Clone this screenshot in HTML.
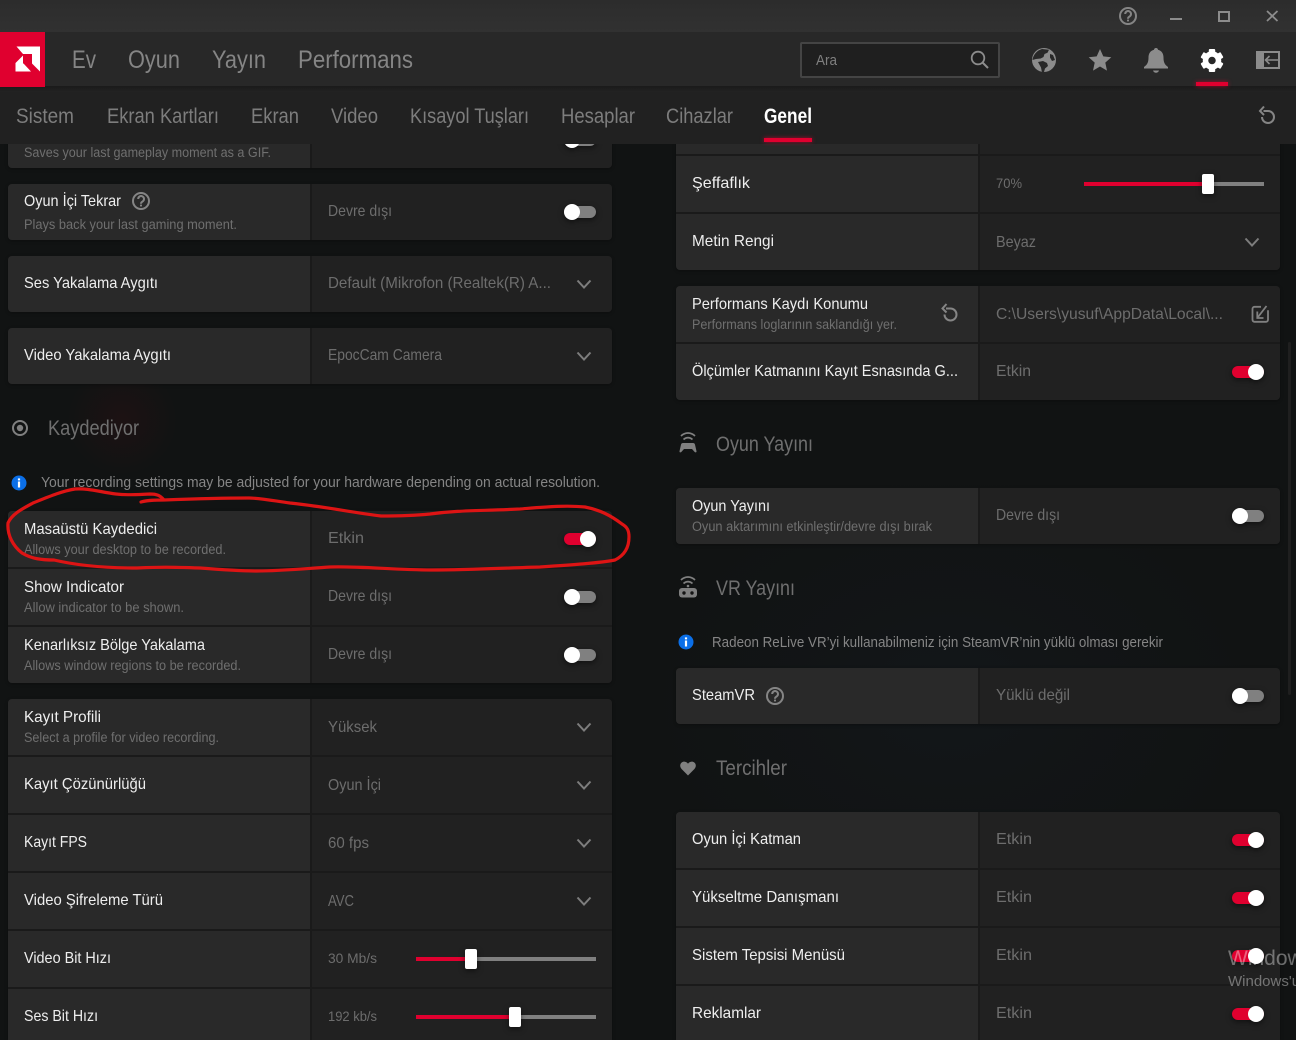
<!DOCTYPE html>
<html lang="tr"><head><meta charset="utf-8"><title>Radeon Ayarları</title>
<style>
html,body{margin:0;padding:0;width:1296px;height:1040px;overflow:hidden;background:#111313}
#wrap{position:relative;width:1296px;height:1040px;overflow:hidden}
#bg{position:absolute;left:0;top:0;width:1296px;height:1040px;background:radial-gradient(circle at 122px 420px,rgba(70,15,20,.22),rgba(70,15,20,0) 55px),radial-gradient(ellipse at 950px 700px,rgba(20,28,36,.35),rgba(0,0,0,0) 300px),#111313}
.g{position:absolute;width:604px;border-radius:4px;overflow:hidden;box-shadow:0 1px 3px rgba(0,0,0,.3)}
.l{left:8px;background:linear-gradient(90deg,#292929 302px,#1a1a1a 302px,#1a1a1a 304px,#212121 304px)}
.r{left:676px;background:linear-gradient(90deg,#292929 302px,#1a1a1a 302px,#1a1a1a 304px,#212121 304px)}
svg#m{position:absolute;left:0;top:0}
text{font-family:"Liberation Sans Narrow","Liberation Sans",sans-serif;white-space:pre}
.t{font-size:16px;fill:#eeeeee}
.s{font-size:13.5px;fill:#6f6f6f}
.v{font-size:16px;fill:#6d6d6d}
.n{font-size:13.5px;fill:#6d6d6d}
.h{font-size:21px;fill:#6f6f6f}
.i{font-size:15px;fill:#858585}
.a{font-size:25px;fill:#858585}
.b{font-size:21.5px;fill:#7d7d7d}
.w{font-family:"Liberation Sans",sans-serif;fill:rgba(255,255,255,.38)}
.sh{filter:drop-shadow(0 2px 3px rgba(0,0,0,.5))}
</style></head><body>
<div id="wrap">
<div id="bg"></div>
<div class="g l" style="top:130px;height:38px"></div>
<div class="g l" style="top:184px;height:56px"></div>
<div class="g l" style="top:256px;height:56px"></div>
<div class="g l" style="top:328px;height:56px"></div>
<div class="g l" style="top:511px;height:172px"></div>
<div class="g l" style="top:699px;height:341px;border-bottom-left-radius:0;border-bottom-right-radius:0"></div>
<div class="g r" style="top:130px;height:140px"></div>
<div class="g r" style="top:286px;height:114px"></div>
<div class="g r" style="top:488px;height:56px"></div>
<div class="g r" style="top:668px;height:56px"></div>
<div class="g r" style="top:812px;height:228px;border-bottom-left-radius:0;border-bottom-right-radius:0"></div>
<svg id="m" width="1296" height="1040" viewBox="0 0 1296 1040" xmlns="http://www.w3.org/2000/svg">
<defs>
<linearGradient id="tb" x1="0" x2="0" y1="0" y2="1"><stop offset="0" stop-color="#2c2c2c"/><stop offset="1" stop-color="#313131"/></linearGradient>
<linearGradient id="sd" x1="0" x2="0" y1="0" y2="1"><stop offset="0" stop-color="#1a1a1a"/><stop offset="1" stop-color="#222"/></linearGradient>
<g id="off" class="sh"><rect x="0" y="-6" width="32" height="12" rx="6" fill="#808080"/><circle cx="8" cy="0" r="8" fill="#fff"/></g>
<g id="on" class="sh"><rect x="0" y="-6" width="32" height="12" rx="6" fill="#e0002f"/><circle cx="24" cy="0" r="8" fill="#fff"/></g>
<path id="ch" d="M-6.5-3.5L0 3.5L6.5-3.5" fill="none" stroke="#7d7d7d" stroke-width="2"/>
<g id="hp" fill="none" stroke="#858585" stroke-width="2"><circle r="8"/><path d="M-2.8-2a2.9 2.9 0 1 1 4.6 2.300c-1.200.8-1.800 1.100-1.800 2.400"/><path d="M0 3.600v1.800"/></g>
<g id="rs" fill="none" stroke="#858585" stroke-width="2"><path d="M-4-3.500H.5a6 6 0 1 1-6 6"/><path d="M-3.500-8L-7.500-3.500L-3.500.5"/></g>
<g id="inf"><circle r="7.500" fill="#0b6fe8"/><rect x="-1.100" y="-1.500" width="2.200" height="6" fill="#fff"/><rect x="-1.100" y="-4.600" width="2.200" height="2" fill="#fff"/></g>
</defs>

<!-- separators -->
<g fill="#1a1a1a">
<rect x="8" y="567" width="604" height="2"/><rect x="8" y="625" width="604" height="2"/>
<rect x="8" y="755" width="604" height="2"/><rect x="8" y="813" width="604" height="2"/><rect x="8" y="871" width="604" height="2"/><rect x="8" y="929" width="604" height="2"/><rect x="8" y="987" width="604" height="2"/>
<rect x="676" y="154" width="604" height="2"/><rect x="676" y="212" width="604" height="2"/>
<rect x="676" y="342" width="604" height="2"/>
<rect x="676" y="868" width="604" height="2"/><rect x="676" y="926" width="604" height="2"/><rect x="676" y="984" width="604" height="2"/>
</g>
<rect x="1288" y="342" width="3" height="353" rx="1.500" fill="#1f1f1f"/>

<!-- left column -->
<use href="#off" x="564" y="140"/>
<text class="s" x="24" y="157" textLength="247" lengthAdjust="spacingAndGlyphs">Saves your last gameplay moment as a GIF.</text>

<text class="t" x="24" y="206" textLength="97" lengthAdjust="spacingAndGlyphs">Oyun İçi Tekrar</text>
<use href="#hp" x="141" y="201"/>
<text class="s" x="24" y="229" textLength="213" lengthAdjust="spacingAndGlyphs">Plays back your last gaming moment.</text>
<text class="v" x="328" y="216" textLength="64" lengthAdjust="spacingAndGlyphs">Devre dışı</text>
<use href="#off" x="564" y="212"/>

<text class="t" x="24" y="288" textLength="134" lengthAdjust="spacingAndGlyphs">Ses Yakalama Aygıtı</text>
<text class="v" x="328" y="288" textLength="223" lengthAdjust="spacingAndGlyphs">Default (Mikrofon (Realtek(R) A...</text>
<use href="#ch" x="584" y="284"/>

<text class="t" x="24" y="360" textLength="147" lengthAdjust="spacingAndGlyphs">Video Yakalama Aygıtı</text>
<text class="v" x="328" y="360" textLength="114" lengthAdjust="spacingAndGlyphs">EpocCam Camera</text>
<use href="#ch" x="584" y="356"/>

<circle cx="20" cy="428" r="7" fill="none" stroke="#808080" stroke-width="2"/><circle cx="20" cy="428" r="3.200" fill="#808080"/>
<text class="h" x="48" y="435" textLength="91" lengthAdjust="spacingAndGlyphs">Kaydediyor</text>
<use href="#inf" x="19" y="483"/>
<text class="i" x="41" y="487" textLength="559" lengthAdjust="spacingAndGlyphs">Your recording settings may be adjusted for your hardware depending on actual resolution.</text>

<text class="t" x="24" y="534" textLength="133" lengthAdjust="spacingAndGlyphs">Masaüstü Kaydedici</text>
<text class="s" x="24" y="554" textLength="202" lengthAdjust="spacingAndGlyphs">Allows your desktop to be recorded.</text>
<text class="v" x="328" y="543" textLength="36" lengthAdjust="spacingAndGlyphs">Etkin</text>
<use href="#on" x="564" y="539"/>

<text class="t" x="24" y="592" textLength="100" lengthAdjust="spacingAndGlyphs">Show Indicator</text>
<text class="s" x="24" y="612" textLength="160" lengthAdjust="spacingAndGlyphs">Allow indicator to be shown.</text>
<text class="v" x="328" y="601" textLength="64" lengthAdjust="spacingAndGlyphs">Devre dışı</text>
<use href="#off" x="564" y="597"/>

<text class="t" x="24" y="650" textLength="181" lengthAdjust="spacingAndGlyphs">Kenarlıksız Bölge Yakalama</text>
<text class="s" x="24" y="670" textLength="217" lengthAdjust="spacingAndGlyphs">Allows window regions to be recorded.</text>
<text class="v" x="328" y="659" textLength="64" lengthAdjust="spacingAndGlyphs">Devre dışı</text>
<use href="#off" x="564" y="655"/>

<text class="t" x="24" y="722" textLength="77" lengthAdjust="spacingAndGlyphs">Kayıt Profili</text>
<text class="s" x="24" y="742" textLength="195" lengthAdjust="spacingAndGlyphs">Select a profile for video recording.</text>
<text class="v" x="328" y="732" textLength="49" lengthAdjust="spacingAndGlyphs">Yüksek</text>
<use href="#ch" x="584" y="727"/>

<text class="t" x="24" y="789" textLength="122" lengthAdjust="spacingAndGlyphs">Kayıt Çözünürlüğü</text>
<text class="v" x="328" y="790" textLength="53" lengthAdjust="spacingAndGlyphs">Oyun İçi</text>
<use href="#ch" x="584" y="785"/>

<text class="t" x="24" y="847" textLength="63" lengthAdjust="spacingAndGlyphs">Kayıt FPS</text>
<text class="v" x="328" y="848" textLength="41" lengthAdjust="spacingAndGlyphs">60 fps</text>
<use href="#ch" x="584" y="843"/>

<text class="t" x="24" y="905" textLength="139" lengthAdjust="spacingAndGlyphs">Video Şifreleme Türü</text>
<text class="v" x="328" y="906" textLength="26" lengthAdjust="spacingAndGlyphs">AVC</text>
<use href="#ch" x="584" y="901"/>

<text class="t" x="24" y="963" textLength="87" lengthAdjust="spacingAndGlyphs">Video Bit Hızı</text>
<text class="n" x="328" y="963" textLength="49" lengthAdjust="spacingAndGlyphs">30 Mb/s</text>
<rect x="416" y="957" width="180" height="4" fill="#808080"/><rect x="416" y="957" width="55" height="4" fill="#e0002f"/>
<rect class="sh" x="465" y="949" width="12" height="20" rx="2" fill="#fff"/>

<text class="t" x="24" y="1021" textLength="74" lengthAdjust="spacingAndGlyphs">Ses Bit Hızı</text>
<text class="n" x="328" y="1021" textLength="49" lengthAdjust="spacingAndGlyphs">192 kb/s</text>
<rect x="416" y="1015" width="180" height="4" fill="#808080"/><rect x="416" y="1015" width="99" height="4" fill="#e0002f"/>
<rect class="sh" x="509" y="1007" width="12" height="20" rx="2" fill="#fff"/>

<!-- right column -->
<text class="t" x="692" y="188" textLength="58" lengthAdjust="spacingAndGlyphs">Şeffaflık</text>
<text class="n" x="996" y="188" textLength="26" lengthAdjust="spacingAndGlyphs">70%</text>
<rect x="1084" y="182" width="180" height="4" fill="#808080"/><rect x="1084" y="182" width="124" height="4" fill="#e0002f"/>
<rect class="sh" x="1202" y="174" width="12" height="20" rx="2" fill="#fff"/>

<text class="t" x="692" y="246" textLength="82" lengthAdjust="spacingAndGlyphs">Metin Rengi</text>
<text class="v" x="996" y="247" textLength="40" lengthAdjust="spacingAndGlyphs">Beyaz</text>
<use href="#ch" x="1252" y="242"/>

<text class="t" x="692" y="309" textLength="176" lengthAdjust="spacingAndGlyphs">Performans Kaydı Konumu</text>
<text class="s" x="692" y="329" textLength="205" lengthAdjust="spacingAndGlyphs">Performans loglarının saklandığı yer.</text>
<use href="#rs" x="950" y="312"/>
<text class="v" x="996" y="319" textLength="227" lengthAdjust="spacingAndGlyphs">C:\Users\yusuf\AppData\Local\...</text>
<g fill="none" stroke="#808080" stroke-width="1.800"><path d="M1261 306.800h-6.500a2 2 0 0 0-2 2v11a2 2 0 0 0 2 2h11.500a2 2 0 0 0 2-2v-9.500"/><path d="M1266.500 306L1258 317"/><path d="M1257.300 311.500V318H1263.500"/></g>

<text class="t" x="692" y="376" textLength="266" lengthAdjust="spacingAndGlyphs">Ölçümler Katmanını Kayıt Esnasında G...</text>
<text class="v" x="996" y="376" textLength="35" lengthAdjust="spacingAndGlyphs">Etkin</text>
<use href="#on" x="1232" y="372"/>

<!-- oyun yayini icon -->
<g fill="none" stroke="#808080" stroke-width="1.700"><path d="M681 436c4-4 10-4 14 0"/><path d="M683.500 439.500c3-2.500 6-2.500 9 0"/></g>
<path d="M683 443h10c1 0 1.700.6 2 1.600l1.500 6.600c.2 1-1 1.600-1.800.8L692 449h-8l-2.700 3c-.8.8-2 .2-1.800-.8l1.500-6.600c.3-1 1-1.600 2-1.600z" fill="#808080"/>
<text class="h" x="716" y="451" textLength="97" lengthAdjust="spacingAndGlyphs">Oyun Yayını</text>

<text class="t" x="692" y="511" textLength="78" lengthAdjust="spacingAndGlyphs">Oyun Yayını</text>
<text class="s" x="692" y="531" textLength="240" lengthAdjust="spacingAndGlyphs">Oyun aktarımını etkinleştir/devre dışı bırak</text>
<text class="v" x="996" y="520" textLength="64" lengthAdjust="spacingAndGlyphs">Devre dışı</text>
<use href="#off" x="1232" y="516"/>

<!-- vr icon -->
<g fill="none" stroke="#808080" stroke-width="1.700"><path d="M681 580c4-4 10-4 14 0"/><path d="M683.500 583.500c3-2.500 6-2.500 9 0"/></g>
<circle cx="688" cy="586" r="1.300" fill="#808080"/>
<rect x="679" y="588" width="18" height="9.500" rx="3" fill="#808080"/><circle cx="684" cy="593" r="1.700" fill="#141414"/><circle cx="692" cy="593" r="1.700" fill="#141414"/>
<text class="h" x="716" y="595" textLength="79" lengthAdjust="spacingAndGlyphs">VR Yayını</text>

<use href="#inf" x="686" y="642"/>
<text class="i" x="712" y="647" textLength="451" lengthAdjust="spacingAndGlyphs">Radeon ReLive VR’yi kullanabilmeniz için SteamVR’nin yüklü olması gerekir</text>

<text class="t" x="692" y="700" textLength="63" lengthAdjust="spacingAndGlyphs">SteamVR</text>
<use href="#hp" x="775" y="696"/>
<text class="v" x="996" y="700" textLength="74" lengthAdjust="spacingAndGlyphs">Yüklü değil</text>
<use href="#off" x="1232" y="696"/>

<path d="M688 775.500l-6.300-6.400c-2-2.100-2-5 0-6.600 1.900-1.500 4.600-1 6.300 1.200 1.700-2.200 4.400-2.700 6.300-1.200 2 1.600 2 4.500 0 6.600z" fill="#808080"/>
<text class="h" x="716" y="775" textLength="71" lengthAdjust="spacingAndGlyphs">Tercihler</text>

<text class="t" x="692" y="844" textLength="109" lengthAdjust="spacingAndGlyphs">Oyun İçi Katman</text>
<text class="v" x="996" y="844" textLength="36" lengthAdjust="spacingAndGlyphs">Etkin</text>
<use href="#on" x="1232" y="840"/>
<text class="t" x="692" y="902" textLength="147" lengthAdjust="spacingAndGlyphs">Yükseltme Danışmanı</text>
<text class="v" x="996" y="902" textLength="36" lengthAdjust="spacingAndGlyphs">Etkin</text>
<use href="#on" x="1232" y="898"/>
<text class="t" x="692" y="960" textLength="153" lengthAdjust="spacingAndGlyphs">Sistem Tepsisi Menüsü</text>
<text class="v" x="996" y="960" textLength="36" lengthAdjust="spacingAndGlyphs">Etkin</text>
<use href="#on" x="1232" y="956"/>
<text class="t" x="692" y="1018" textLength="69" lengthAdjust="spacingAndGlyphs">Reklamlar</text>
<text class="v" x="996" y="1018" textLength="36" lengthAdjust="spacingAndGlyphs">Etkin</text>
<use href="#on" x="1232" y="1014"/>

<!-- hand-drawn annotation -->
<path d="M141 502C148 500 156 500 164 500C160 495 156 494 150 494C135 495 125 495 116 494C100 492 88 488 75 489C62 491 48 497 33 503C22 509 12 514 8 523C7 535 13 546 22 553C32 559 42 560 54 560C75 565 105 568 137 568C160 567 170 567 200 568C225 570 240 571 257 571C280 571 300 569 330 567C360 566 395 570 431 570C470 570 505 568 540 567C570 565 600 563 615 560C625 555 629 547 629 537C629 530 627 527 622 524C610 515 600 510 585 507C565 505 545 507 520 509C480 511 460 510 430 514C410 516 395 516 381 516C350 512 320 506 290 503C275 501 260 498 249 498C220 498 190 499 164 500" fill="none" stroke="#dd1414" stroke-width="3.200" stroke-linecap="round"/>

<!-- watermark -->
<text class="w" x="1228" y="965" font-size="21">Windows</text>
<text class="w" x="1228" y="986" font-size="15">Windows'u</text>

<!-- subnav -->
<rect x="0" y="86" width="1296" height="58" fill="#212121"/>
<rect x="0" y="86" width="1296" height="6" fill="url(#sd)"/>
<text class="b" x="16" y="123" textLength="58" lengthAdjust="spacingAndGlyphs">Sistem</text>
<text class="b" x="107" y="123" textLength="112" lengthAdjust="spacingAndGlyphs">Ekran Kartları</text>
<text class="b" x="251" y="123" textLength="48" lengthAdjust="spacingAndGlyphs">Ekran</text>
<text class="b" x="331" y="123" textLength="47" lengthAdjust="spacingAndGlyphs">Video</text>
<text class="b" x="410" y="123" textLength="119" lengthAdjust="spacingAndGlyphs">Kısayol Tuşları</text>
<text class="b" x="561" y="123" textLength="74" lengthAdjust="spacingAndGlyphs">Hesaplar</text>
<text class="b" x="666" y="123" textLength="67" lengthAdjust="spacingAndGlyphs">Cihazlar</text>
<text x="764" y="123" font-size="21.500" font-weight="700" fill="#fff" textLength="48" lengthAdjust="spacingAndGlyphs">Genel</text>
<rect x="764" y="138" width="48" height="4" fill="#e0002f" style="filter:drop-shadow(0 0 2px rgba(224,0,47,.7))"/>
<use href="#rs" x="1267.500" y="114.500"/>

<!-- title bar + nav -->
<rect x="0" y="0" width="1296" height="32" fill="url(#tb)"/>
<rect x="0" y="32" width="1296" height="54" fill="#282828"/>
<rect x="0" y="32" width="45" height="55" fill="#e0002f"/>
<path d="M16.500 46.500H40V71.500L32 63.500V54H23Z" fill="#fff"/>
<path d="M15.500 71.500V63L23 55.500V63.500H23.500L31 71.500Z" fill="#fff"/>
<text class="a" x="72" y="68" textLength="24" lengthAdjust="spacingAndGlyphs">Ev</text>
<text class="a" x="128" y="68" textLength="52" lengthAdjust="spacingAndGlyphs">Oyun</text>
<text class="a" x="212" y="68" textLength="54" lengthAdjust="spacingAndGlyphs">Yayın</text>
<text class="a" x="298" y="68" textLength="115" lengthAdjust="spacingAndGlyphs">Performans</text>

<!-- window buttons -->
<use href="#hp" x="1128" y="16"/>
<rect x="1170" y="18" width="12" height="2" fill="#8c8c8c"/>
<rect x="1219" y="12" width="10" height="9" fill="none" stroke="#8c8c8c" stroke-width="2"/>
<path d="M1267 11L1277.500 21M1277.500 11L1267 21" stroke="#8c8c8c" stroke-width="1.800" fill="none"/>

<!-- search -->
<rect x="801" y="43" width="198" height="34" fill="#1f1f1f" stroke="#444" stroke-width="2" rx="1"/>
<text class="i" x="816" y="65" textLength="21" lengthAdjust="spacingAndGlyphs" style="font-size:14.500px;fill:#7f7f7f">Ara</text>
<circle cx="978" cy="58" r="6.300" fill="none" stroke="#8c8c8c" stroke-width="1.800"/><path d="M982.500 62.500L988 68" stroke="#8c8c8c" stroke-width="2"/>

<!-- globe -->
<circle cx="1044" cy="60" r="12" fill="#8c8c8c"/>
<path d="M1042 49l7 .8-1.500 3-3 1.200-1 3-2.800 1.500L1036 59l-3.500 1c.7-5 4-9.500 9.500-11zM1050 54l3 1 2 5-3 1-2-3.500zM1038 62l5-1 4 2 1 3-3 2.500-1 3.500-2 .5-1-5z" fill="#282828"/>
<!-- star -->
<path d="M1100 49l3.300 7.400 8 .8-6 5.400 1.700 8-7-4.100-7 4.100 1.700-8-6-5.400 8-.8z" fill="#8c8c8c"/>
<!-- bell -->
<path d="M1156 48c1.200 0 2 .8 2 1.800 3.800 1 5.500 4 5.500 7.700 0 4.500 1 7 4.500 9.500v1.500h-24V67c3.500-2.500 4.500-5 4.500-9.500 0-3.700 1.700-6.700 5.500-7.700 0-1 .8-1.800 2-1.800z" fill="#8c8c8c"/>
<path d="M1153 70.500h6c-.5 1.500-1.500 2.200-3 2.200s-2.500-.7-3-2.200z" fill="#8c8c8c"/>
<!-- gear -->
<g transform="translate(1212 60.500)" fill="#fff">
<circle r="6.500" fill="none" stroke="#fff" stroke-width="5.500"/>
<rect x="-3.200" y="-11.500" width="6.400" height="6" rx="1"/>
<rect x="-3.200" y="-11.500" width="6.400" height="6" rx="1" transform="rotate(60)"/>
<rect x="-3.200" y="-11.500" width="6.400" height="6" rx="1" transform="rotate(120)"/>
<rect x="-3.200" y="-11.500" width="6.400" height="6" rx="1" transform="rotate(180)"/>
<rect x="-3.200" y="-11.500" width="6.400" height="6" rx="1" transform="rotate(240)"/>
<rect x="-3.200" y="-11.500" width="6.400" height="6" rx="1" transform="rotate(300)"/>
</g>
<rect x="1196" y="82" width="32" height="4" fill="#e0002f" style="filter:drop-shadow(0 0 2px rgba(224,0,47,.7))"/>
<!-- panel -->
<rect x="1256" y="51" width="24" height="18" fill="#8c8c8c"/>
<rect x="1264" y="53" width="14" height="14" fill="#282828"/>
<path d="M1278 60h-13M1269.500 56l-4 4 4 4" fill="none" stroke="#8c8c8c" stroke-width="1.600"/>
</svg>
</div>
</body></html>
